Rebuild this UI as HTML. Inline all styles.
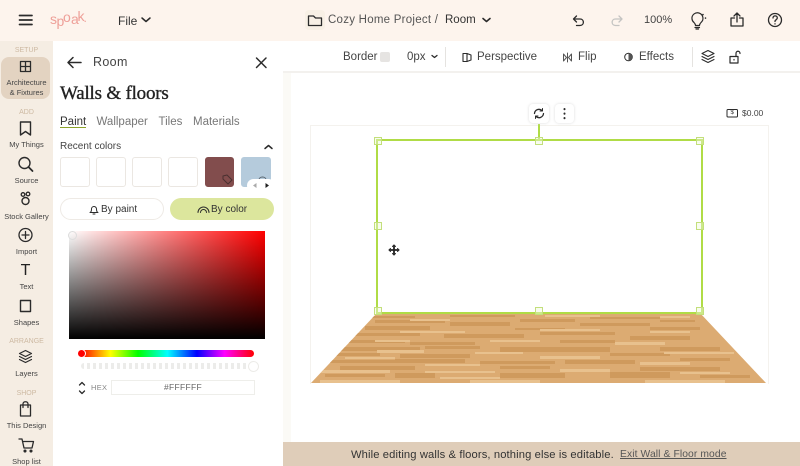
<!DOCTYPE html>
<html><head><meta charset="utf-8">
<style>
html,body{margin:0;padding:0}
body{width:800px;height:466px;overflow:hidden;position:relative;background:#fff;font-family:"Liberation Sans",sans-serif;color:#333}
.a{position:absolute;white-space:nowrap}
svg{position:absolute;overflow:visible}
.ic{fill:none;stroke:#2b2b2b;stroke-width:1.5;stroke-linecap:round;stroke-linejoin:round}
.lb{position:absolute;left:0;width:53px;text-align:center;font-size:7.5px;color:#444;white-space:nowrap}
.sec{position:absolute;left:0;width:53px;text-align:center;font-size:7px;color:#cdb9a2}
.sw{position:absolute;top:157px;width:28px;height:28px;border:1px solid #ebe7e2;border-radius:3px;background:#fff}
.h{position:absolute;width:6px;height:6px;border:1px solid #c3df7c;background:rgba(240,248,220,.45)}
.t{font-size:11.500px;color:#444;top:51px}
.sp{position:absolute;font-size:14px;line-height:14px;color:#ee9f98}
</style></head><body>
<div class="a" style="left:0;top:0;width:800px;height:41px;background:#fdf4ed"></div>
<div class="a" style="left:0;top:41px;width:53px;height:425px;background:#f5ede3"></div>
<div class="a" style="left:283px;top:73px;width:8px;height:369px;background:#fbfaf6"></div>
<div class="a" style="left:283px;top:71px;width:517px;height:2px;background:#f3f1ee"></div>
<div class="a" style="left:283px;top:442px;width:517px;height:24px;background:#dfcdb9"></div>
<div class="a" style="left:305px;top:10px;width:20px;height:20px;border-radius:4px;background:#f8f0e5"></div>

<!-- top bar -->
<svg class="ic" style="left:0;top:0" width="800" height="41">
<path d="M19.500 15.500H32M19.500 20H32M19.500 24.500H32" stroke-width="1.700"/>
<path d="M142 18l4 3.500 4-3.500" />
<path d="M308.500 16h5l2 2h6v7.500h-13z" stroke-width="1.300"/>
<path d="M483 18.500l3.500 3 3.500-3" stroke-width="1.600"/>
<path d="M576.500 16l-3 3 3 3M573.500 19h6.500c4.500 0 4.500 6.500 0 6.500h-3.500" stroke-width="1.300"/>
<path d="M619 16l3 3-3 3M622 19h-6.500c-4.500 0-4.500 6.500 0 6.500h3.500" stroke="#c4c4c2" stroke-width="1.300"/>
<path d="M692 19a5.500 5.500 0 1 1 9 3.500c-1 1-1.500 2-1.500 3h-4c0-1-.5-2-1.500-3a5.500 5.500 0 0 1-2-3.500zM695 27.500h4.500M696 29h2.500" stroke-width="1.200"/>
<path d="M703 14.500v.1M705.500 18v.1" stroke-width="1.600"/>
<path d="M737 22v-9M734 16l3-3 3 3M734.500 18h-3.500v8h12v-8h-3.500" stroke-width="1.300"/>
<circle cx="775" cy="20" r="6.500" stroke-width="1.300"/>
<path d="M773 18c0-2.800 4.300-2.800 4.300 0 0 1.700-2.300 1.700-2.300 3.500M775 23.800v.2" stroke-width="1.300"/>
</svg>
<span class="sp" style="left:50px;top:12px">s</span>
<span class="sp" style="left:56.500px;top:14px">p</span>
<span class="sp" style="left:63px;top:10px">o</span>
<span class="sp" style="left:71px;top:12px">a</span>
<span class="sp" style="left:77.500px;top:9px">k</span>
<span class="sp" style="left:83.500px;top:11px;font-size:12px">.</span>
<div class="a" style="left:118px;top:13.500px;font-size:12px;color:#333">File</div>
<div class="a" style="left:328px;top:14px;font-size:11.500px;color:#555;letter-spacing:.25px">Cozy Home Project /</div>
<div class="a" style="left:445px;top:13.500px;font-size:11.500px;color:#333">Room</div>
<div class="a" style="left:644px;top:14px;font-size:11px;color:#444">100%</div>

<!-- sidebar -->
<div class="a" style="left:1px;top:57px;width:49px;height:42px;background:#e3d3c1;border-radius:8px"></div>
<div class="sec" style="top:46.500px">SETUP</div>
<div class="lb" style="top:78px;line-height:10px">Architecture<br>&amp; Fixtures</div>
<div class="sec" style="top:108.500px">ADD</div>
<div class="lb" style="top:140px">My Things</div>
<div class="lb" style="top:176px">Source</div>
<div class="lb" style="top:212px">Stock Gallery</div>
<div class="lb" style="top:247px">Import</div>
<div class="a" style="left:0;width:51px;text-align:center;top:262px;font-size:16px;color:#222">T</div>
<div class="lb" style="top:282px">Text</div>
<div class="lb" style="top:318px">Shapes</div>
<div class="sec" style="top:338px">ARRANGE</div>
<div class="lb" style="top:369px">Layers</div>
<div class="sec" style="top:390px">SHOP</div>
<div class="lb" style="top:421px">This Design</div>
<div class="lb" style="top:457px">Shop list</div>
<svg class="ic" style="left:0;top:0" width="53" height="466">
<path d="M20.500 61.500h10v10h-10zM25.500 61.500v10M20.500 66.500h10" stroke-width="1.300"/>
<path d="M20.500 122h10v13l-5-3.500-5 3.500z" stroke-width="1.400"/>
<circle cx="24.500" cy="163" r="5.500" stroke-width="1.400"/><path d="M28.500 167l4 4" stroke-width="1.800"/>
<circle cx="25.500" cy="201" r="3.500" stroke-width="1.400"/><circle cx="23" cy="194.500" r="1.800" stroke-width="1.300"/><circle cx="28" cy="194" r="1.800" stroke-width="1.300"/>
<circle cx="25.500" cy="235" r="6.500" stroke-width="1.300"/><path d="M25.500 231.500v7M22 235h7" stroke-width="1.300"/>
<path d="M20.500 300.500h10v11h-10z" stroke-width="1.400"/>
<path d="M25.500 350.500l6 3-6 3-6-3zM19.500 356.500l6 3 6-3M19.500 359.500l6 3 6-3" stroke-width="1.200"/>
<path d="M20.500 405h10v11h-10zM23 407.500v-3.500c0-3 5-3 5 0v3.500" stroke-width="1.300"/>
<path d="M19 439h3l2 9h8l1.500-6.500h-11" stroke-width="1.300"/><circle cx="25" cy="451" r=".8"/><circle cx="31" cy="451" r=".8"/>
</svg>

<!-- panel -->
<svg class="ic" style="left:0;top:0" width="283" height="466">
<path d="M68 62.500h13M73 57.500l-5 5 5 5" stroke-width="1.500"/>
<path d="M256.500 58l9.500 9.500M266 58l-9.500 9.500" stroke-width="1.500"/>
<path d="M265 148.500l3.500-3 3.500 3" stroke-width="1.500"/>
<path d="M79.500 385l2.500-2.500 2.500 2.500M79.500 391l2.500 2.500 2.500-2.500" stroke-width="1.300"/>
</svg>
<div class="a" style="left:93px;top:55px;font-size:12.500px;letter-spacing:.35px;color:#444">Room</div>
<div class="a" style="left:60px;top:83px;font-family:'Liberation Serif',serif;font-size:19px;color:#222;letter-spacing:-.2px;-webkit-text-stroke:.35px #222">Walls &amp; floors</div>
<div class="a" style="left:60px;top:115.500px;font-size:11.500px;color:#333">Paint</div>
<div class="a" style="left:60px;top:127px;width:26px;height:1px;background:#8ca32a"></div>
<div class="a" style="left:96.500px;top:115.500px;font-size:11.500px;color:#777">Wallpaper</div>
<div class="a" style="left:158.500px;top:115.500px;font-size:11.500px;color:#777">Tiles</div>
<div class="a" style="left:193px;top:115.500px;font-size:11.500px;color:#777">Materials</div>
<div class="a" style="left:60px;top:141px;font-size:10px;color:#444">Recent colors</div>

<div class="sw" style="left:60px"></div>
<div class="sw" style="left:96px"></div>
<div class="sw" style="left:132px"></div>
<div class="sw" style="left:168px"></div>
<div class="sw" style="left:205px;background:#824d4d;border-color:#824d4d;width:27px"></div>
<div class="sw" style="left:241px;background:#b5cbdc;border-color:#b5cbdc"></div>
<svg class="ic" style="left:0;top:0" width="283" height="220">
<path d="M223 176l4-1 5 5-4 4-5-5z" stroke="#4a3030" stroke-width="1"/>
<path d="M259 180c0-4 7-4 7 0" stroke="#5a6670" stroke-width="1"/>
</svg>
<div class="a" style="left:247px;top:179px;width:28px;height:13px;border-radius:7px;background:#fff"></div>
<svg style="left:0;top:0" width="283" height="220">
<path d="M256.500 183v5l-3.500-2.500z" fill="#aaa"/><path d="M265.500 183v5l3.500-2.500z" fill="#222"/>
</svg>

<div class="a" style="left:60px;top:198px;width:102px;height:20px;border:1px solid #eeeae5;border-radius:11px;background:#fff"></div>
<div class="a" style="left:170px;top:198px;width:104px;height:22px;border-radius:11px;background:#dce69d"></div>
<div class="a" style="left:101px;top:203.500px;font-size:10px;color:#333">By paint</div>
<div class="a" style="left:211px;top:203.500px;font-size:10px;color:#333">By color</div>
<svg class="ic" style="left:0;top:0" width="283" height="230">
<path d="M90 212.500c1.500-.5 1.500-2 1.500-3.500a2.500 2.500 0 0 1 5 0c0 1.500 0 3 1.500 3.500zM93 214h2" stroke-width="1"/>
<path d="M198 212.500a5.500 5.500 0 0 1 11 0M200.500 212.500a3 3 0 0 1 6 0" stroke-width="1"/>
</svg>

<!-- picker -->
<div class="a" style="left:69px;top:231px;width:196px;height:108px;background:linear-gradient(to bottom,rgba(0,0,0,0),#000),linear-gradient(to right,#fff,#f00)"></div>
<div class="a" style="left:68px;top:231px;width:7px;height:7px;border:1px solid #ddd;border-radius:50%"></div>
<div class="a" style="left:81px;top:350px;width:173px;height:7px;border-radius:4px;background:linear-gradient(to right,#f00,#ff0 17%,#0f0 33%,#0ff 50%,#00f 67%,#f0f 83%,#f00)"></div>
<div class="a" style="left:77px;top:349px;width:7px;height:7px;border-radius:50%;background:#f00;border:1px solid #fff"></div>
<div class="a" style="left:81px;top:363px;width:170px;height:6px;border-radius:3px;background:repeating-linear-gradient(90deg,#ececea 0 3px,#fff 3px 6px)"></div>
<div class="a" style="left:248px;top:361px;width:9px;height:9px;border-radius:50%;background:#fff;border:1px solid #ecebe8"></div>
<div class="a" style="left:91px;top:383px;font-size:7.500px;color:#888;letter-spacing:.3px">HEX</div>
<div class="a" style="left:111px;top:380px;width:142px;height:13px;border:1px solid #eeeeea;text-align:center;font-size:8.500px;line-height:13px;color:#666;letter-spacing:.3px">#FFFFFF</div>

<!-- toolbar -->
<div class="a t" style="left:343px">Border</div>
<div class="a" style="left:380px;top:52px;width:10px;height:10px;background:#e6e4e2;border-radius:2px"></div>
<div class="a t" style="left:407px">0px</div>
<div class="a" style="left:444.500px;top:47px;width:1px;height:20px;background:#e5e3e0"></div>
<div class="a t" style="left:477px">Perspective</div>
<div class="a t" style="left:578px">Flip</div>
<div class="a t" style="left:639px">Effects</div>
<div class="a" style="left:691.500px;top:47px;width:1px;height:20px;background:#e5e3e0"></div>
<svg class="ic" style="left:0;top:0" width="800" height="72">
<path d="M432 55.500l2.500 2 2.500-2" stroke-width="1.300"/>
<path d="M463 53.500h4v8h-4zM467 53.500l4 1.500v5l-4 1.500" stroke-width="1.100"/>
<path d="M563.500 54v7l3-3.500zM571.500 54v7l-3-3.500zM567.500 53v9" stroke-width="1" stroke="#555"/>
<circle cx="628.500" cy="57" r="3.800" stroke-width="1"/><path d="M628.500 53.200a3.800 3.800 0 0 1 0 7.600z" fill="#555" stroke="none"/>
<path d="M708 50.500l6 3-6 3-6-3zM702 56.500l6 3 6-3M702 59.500l6 3 6-3" stroke-width="1.100"/>
<path d="M730 56.500h8v6.500h-8zM736 56v-2.500c0-3 4-3 4 0" stroke-width="1.200"/><path d="M734 59.500v.5" stroke-width="1.200"/>
</svg>

<!-- canvas -->
<div class="a" style="left:310px;top:125px;width:459px;height:259px;border:1px solid #f4f2ee;border-bottom:none;box-sizing:border-box"></div>
<svg style="left:0;top:0" width="800" height="466" shape-rendering="crispEdges">
<defs><clipPath id="fl"><polygon points="377,313 700,313 766,383 311,383"/></clipPath></defs>
<g clip-path="url(#fl)">
<rect x="300" y="313" width="480" height="71" fill="#dcab72"/>
<g fill="#cf9a5d">
<rect x="370" y="316" width="45" height="2"/><rect x="450" y="315" width="65" height="2"/><rect x="520" y="319" width="55" height="3"/><rect x="590" y="317" width="70" height="2"/><rect x="660" y="320" width="35" height="2"/>
<rect x="375" y="320" width="70" height="3"/><rect x="450" y="322" width="60" height="4"/><rect x="580" y="323" width="70" height="3"/>
<rect x="365" y="326" width="65" height="4"/><rect x="515" y="328" width="50" height="2"/><rect x="650" y="327" width="50" height="3"/>
<rect x="350" y="333" width="70" height="3"/><rect x="444" y="334" width="80" height="4"/><rect x="540" y="332" width="75" height="3"/><rect x="630" y="336" width="60" height="4"/>
<rect x="345" y="340" width="60" height="3"/><rect x="410" y="342" width="65" height="3"/><rect x="560" y="340" width="55" height="3"/>
<rect x="340" y="347" width="80" height="4"/><rect x="425" y="346" width="55" height="3"/><rect x="500" y="347" width="110" height="5"/><rect x="660" y="347" width="60" height="4"/>
<rect x="320" y="353" width="60" height="3"/><rect x="400" y="354" width="70" height="4"/><rect x="610" y="353" width="60" height="3"/>
<rect x="330" y="360" width="70" height="3"/><rect x="395" y="359" width="70" height="4"/><rect x="480" y="361" width="75" height="3"/><rect x="565" y="360" width="70" height="4"/><rect x="680" y="358" width="50" height="3"/>
<rect x="340" y="366" width="75" height="4"/><rect x="500" y="366" width="50" height="3"/><rect x="640" y="367" width="80" height="4"/>
<rect x="395" y="373" width="40" height="5"/><rect x="500" y="373" width="65" height="5"/><rect x="610" y="372" width="60" height="6"/><rect x="325" y="374" width="60" height="3"/><rect x="700" y="375" width="50" height="3"/>
</g>
<g fill="#e8c18e">
<rect x="410" y="319" width="40" height="2"/><rect x="545" y="315" width="55" height="2"/><rect x="660" y="316" width="30" height="2"/>
<rect x="400" y="331" width="65" height="2"/><rect x="540" y="329" width="60" height="2"/><rect x="650" y="331" width="40" height="2"/>
<rect x="375" y="340" width="35" height="2"/><rect x="490" y="340" width="50" height="2"/><rect x="615" y="342" width="50" height="3"/>
<rect x="377" y="350" width="47" height="3"/><rect x="475" y="352" width="48" height="2"/><rect x="664" y="352" width="70" height="2"/>
<rect x="345" y="357" width="50" height="2"/><rect x="425" y="364" width="55" height="2"/><rect x="540" y="356" width="60" height="3"/><rect x="640" y="362" width="50" height="3"/>
<rect x="320" y="370" width="70" height="3"/><rect x="425" y="371" width="70" height="2"/><rect x="560" y="369" width="50" height="3"/><rect x="680" y="372" width="50" height="2"/>
<rect x="320" y="380" width="80" height="3"/><rect x="440" y="377" width="60" height="2"/><rect x="470" y="380" width="70" height="3"/><rect x="645" y="380" width="80" height="3"/>
</g>
</g>
</svg>
<div class="a" style="left:376px;top:139px;width:326.500px;height:174.500px;border:2px solid #b0dc46;box-sizing:border-box"></div>
<div class="a" style="left:538px;top:124px;width:2px;height:16px;background:#b0dc46"></div>
<div class="h" style="left:374px;top:137px"></div><div class="h" style="left:535px;top:137px"></div><div class="h" style="left:696px;top:137px"></div>
<div class="h" style="left:374px;top:222px"></div><div class="h" style="left:696px;top:222px"></div>
<div class="h" style="left:374px;top:307px"></div><div class="h" style="left:535px;top:307px"></div><div class="h" style="left:696px;top:307px"></div>
<div class="a" style="left:529px;top:104px;width:20px;height:19px;background:#fff;border-radius:4px;box-shadow:0 0 3px #ddd"></div>
<div class="a" style="left:555px;top:104px;width:19px;height:19px;background:#fff;border-radius:4px;box-shadow:0 0 3px #ddd"></div>
<svg class="ic" style="left:0;top:0" width="800" height="270">
<path d="M534.500 113.500a4.500 4.500 0 0 1 7.500-3M543.500 113.500a4.500 4.500 0 0 1-7.500 3" stroke-width="1.300"/>
<path d="M542.500 108.500v2.500h-2.500M535.500 118.500v-2.500h2.500" stroke-width="1"/>
<path d="M564.500 109v.2M564.500 113.500v.2M564.500 118v.2" stroke-width="2"/>
<rect x="727" y="109.500" width="10.500" height="7.500" rx="1" stroke-width="1"/>
<path d="M394 245.500v9M389.500 250h9" stroke-width="1.800" stroke="#222"/>
<path d="M392.500 246.500l1.500-1.500 1.500 1.500M392.500 253.500l1.500 1.500 1.500-1.500M390.500 248.500l-1.500 1.500 1.500 1.500M397.500 248.500l1.500 1.500-1.500 1.500" stroke-width="1"/>
</svg>
<div class="a" style="left:730.500px;top:110px;font-size:6px;color:#333">$</div>
<div class="a" style="left:742px;top:108px;font-size:8.500px;color:#444">$0.00</div>

<!-- bottom -->
<div class="a" style="left:351px;top:449px;font-size:11.200px;color:#333;letter-spacing:.12px">While editing walls &amp; floors, nothing else is editable.</div>
<div class="a" style="left:620px;top:449px;font-size:10.300px;color:#555;text-decoration:underline;letter-spacing:.1px">Exit Wall &amp; Floor mode</div>
</body></html>
